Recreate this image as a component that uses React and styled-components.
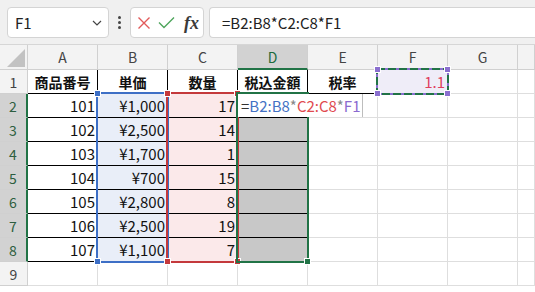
import React from 'react';
import styled, { createGlobalStyle } from 'styled-components';

const Global = createGlobalStyle`
  html, body { margin: 0; padding: 0; background: #fff; }
  body {
    font-family: "Noto Sans CJK JP", "Noto Sans", sans-serif;
    width: 535px; height: 292px; overflow: hidden;
  }
`;

const Page = styled.div`
  width: 535px;
  height: 292px;
  overflow: hidden;
  display: flex;
  flex-direction: column;
  background: #fff;
`;

const Toolbar = styled.div`
  flex: none;
  height: 45px;
  box-sizing: border-box;
  background: #f0f0f0;
  border-bottom: 1px solid #d6d6d6;
  display: flex;
  align-items: flex-start;
  padding: 7px 0 0 7px;
`;

const NameBox = styled.div`
  box-sizing: border-box;
  width: 102px;
  height: 31px;
  background: #fff;
  border: 1px solid #d4d4d4;
  border-radius: 4px;
  display: flex;
  align-items: center;
  justify-content: space-between;
  padding: 0 6px 0 7px;
  font-size: 15px;
  color: #222;
`;

const Grip = styled.div`
  width: 21px;
  height: 31px;
  display: flex;
  flex-direction: column;
  align-items: center;
  justify-content: center;
  gap: 2px;
  & > i {
    display: block;
    width: 3px;
    height: 3px;
    border-radius: 50%;
    background: #444;
  }
`;

const ButtonGroup = styled.div`
  box-sizing: border-box;
  width: 74px;
  height: 31px;
  background: #fff;
  border: 1px solid #d4d4d4;
  border-radius: 4px;
  display: flex;
  align-items: center;
  padding: 0 4px 0 6px;
  gap: 7px;
`;

const Fx = styled.span`
  font-family: "Liberation Serif", "DejaVu Serif", serif;
  font-style: italic;
  font-weight: 700;
  font-size: 18px;
  color: #3a3a3a;
  letter-spacing: 0px;
  margin-left: 2px;
  line-height: 1;
`;

const FormulaBox = styled.div`
  flex: 1;
  box-sizing: border-box;
  height: 31px;
  margin-left: 5px;
  background: #fff;
  border: 1px solid #d4d4d4;
  border-right: none;
  border-radius: 4px 0 0 4px;
  display: flex;
  align-items: center;
  padding-left: 12px;
  font-size: 15px;
  color: #222;
  white-space: nowrap;
`;

const Sheet = styled.div`
  flex: none;
  display: grid;
  grid-template-columns: 28px repeat(7, 70px) 1fr;
  grid-template-rows: 25px repeat(9, 24px);
`;

const Corner = styled.div`
  grid-row: 1;
  grid-column: 1;
  box-sizing: border-box;
  background: #f3f3f3;
  border-right: 1px solid #d0d0d0;
  border-bottom: 1px solid #d0d0d0;
  display: flex;
`;

const ColHead = styled.div`
  grid-row: 1;
  grid-column: ${p => p.$c};
  box-sizing: border-box;
  background: ${p => (p.$sel ? '#d2d2d2' : '#f3f3f3')};
  border-right: 1px solid #d0d0d0;
  border-bottom: ${p => (p.$sel ? '2px solid #217346' : '1px solid #d0d0d0')};
  display: flex;
  align-items: center;
  justify-content: center;
  font-size: 14px;
  color: ${p => (p.$sel ? '#1d6b3c' : '#444')};
`;

const RowHead = styled.div`
  grid-row: ${p => p.$r};
  grid-column: 1;
  box-sizing: border-box;
  background: ${p => (p.$sel ? '#d2d2d2' : '#f3f3f3')};
  border-right: ${p => (p.$sel ? '2px solid #217346' : '1px solid #d0d0d0')};
  border-bottom: 1px solid #d0d0d0;
  display: flex;
  align-items: center;
  justify-content: center;
  font-size: 14px;
  color: ${p => (p.$sel ? '#2d5e40' : '#444')};
`;

const Cell = styled.div`
  grid-row: ${p => p.$r};
  grid-column: ${p => p.$c};
  box-sizing: border-box;
  min-width: 0;
  background: ${p => p.$bg || '#fff'};
  border-right: 1px solid ${p => p.$line || '#dedede'};
  border-bottom: 1px solid ${p => p.$line || '#dedede'};
  display: flex;
  align-items: center;
  justify-content: ${p => (p.$align === 'right' ? 'flex-end' : p.$align === 'center' ? 'center' : 'flex-start')};
  padding: 0 2px;
  font-size: ${p => (p.$bold ? '14px' : '15px')};
  font-weight: ${p => (p.$bold ? 700 : 400)};
  color: ${p => p.$color || '#111'};
  white-space: nowrap;
`;

const RangeBox = styled.div`
  grid-column: ${p => p.$col};
  grid-row: ${p => p.$row};
  margin: -2px -1px -1px -2px;
  border: 2px solid ${p => p.$color};
  position: relative;
  z-index: ${p => p.$z || 2};
  pointer-events: none;
`;

const Handle = styled.span`
  position: absolute;
  width: 5px;
  height: 5px;
  background: ${p => p.$color};
  border: 1px solid #fff;
  ${p => p.$v}: -4px;
  ${p => p.$h}: -4px;
`;

const Marquee = styled.svg`
  position: absolute;
  left: -2px;
  top: -2px;
  width: calc(100% + 4px);
  height: calc(100% + 4px);
  overflow: visible;
`;

const EditBox = styled.div`
  grid-column: 5 / span 2;
  grid-row: 3;
  justify-self: start;
  align-self: start;
  box-sizing: border-box;
  width: 125px;
  height: 23px;
  background: #fff;
  border-right: 1px solid #bdbdbd;
  z-index: 3;
  display: flex;
  align-items: center;
  padding-left: 3px;
  font-size: 15px;
  white-space: nowrap;
  color: #333;
`;

const Tok = styled.span`
  color: ${p => p.$color};
`;

const COLS = ['A', 'B', 'C', 'D', 'E', 'F', 'G', ''];
const HEADERS = ['商品番号', '単価', '数量', '税込金額', '税率'];
const DATA = [
  [101, '¥1,000', 17],
  [102, '¥2,500', 14],
  [103, '¥1,700', 1],
  [104, '¥700', 15],
  [105, '¥2,800', 8],
  [106, '¥2,500', 19],
  [107, '¥1,100', 7],
];

const BLUE = '#3d6fc6';
const RED = '#c4393c';
const GREEN = '#217346';
const PURPLE = '#8a6fcf';

function cellProps(row, ci) {
  const p = { children: '' };
  if (row === 1) {
    if (ci < 5) {
      p.children = HEADERS[ci];
      p.$bold = true;
      p.$align = 'center';
      p.$line = '#000';
    } else if (ci === 5) {
      p.children = '1.1';
      p.$align = 'right';
      p.$color = '#e0405e';
      p.$bg = '#efedf8';
    }
  } else if (row <= 8) {
    const d = DATA[row - 2];
    if (ci < 4) p.$line = '#000';
    p.$align = 'right';
    if (ci === 0) p.children = d[0];
    if (ci === 1) { p.children = d[1]; p.$bg = '#e9eef8'; }
    if (ci === 2) { p.children = d[2]; p.$bg = '#fbe9ea'; }
    if (ci === 3 && row > 2) p.$bg = '#c8c8c8';
  }
  return p;
}

export default function App() {
  const rows = [];
  for (let r = 1; r <= 9; r++) {
    rows.push(
      <RowHead key={'h' + r} $r={r + 1} $sel={r >= 2 && r <= 8}>{r}</RowHead>
    );
    COLS.forEach((c, ci) => {
      const p = cellProps(r, ci);
      rows.push(<Cell key={r + '-' + ci} $r={r + 1} $c={ci + 2} {...p} />);
    });
  }

  return (
    <>
      <Global />
      <Page>
        <Toolbar>
          <NameBox>
            <span>F1</span>
            <svg width="10" height="6" viewBox="0 0 10 6">
              <polyline points="1,1 5,5 9,1" fill="none" stroke="#444" strokeWidth="1.2" />
            </svg>
          </NameBox>
          <Grip><i /><i /><i /></Grip>
          <ButtonGroup>
            <svg width="14" height="14" viewBox="0 0 14 14">
              <path d="M1.5 1.5 L12.5 12.5 M12.5 1.5 L1.5 12.5" stroke="#e25a5a" strokeWidth="1.4" fill="none" />
            </svg>
            <svg width="17" height="13" viewBox="0 0 17 13">
              <polyline points="1,6.5 6,11.5 16,1.5" stroke="#4fa55d" strokeWidth="1.4" fill="none" />
            </svg>
            <Fx>fx</Fx>
          </ButtonGroup>
          <FormulaBox>=B2:B8*C2:C8*F1</FormulaBox>
        </Toolbar>
        <Sheet>
          <Corner>
            <svg width="27" height="24" viewBox="0 0 27 24">
              <polygon points="7,22 25,22 25,4" fill="#c2c2c2" />
            </svg>
          </Corner>
          {COLS.map((c, i) => (
            <ColHead key={'c' + i} $c={i + 2} $sel={c === 'D'}>{c}</ColHead>
          ))}
          {rows}

          <RangeBox $col={3} $row="3 / span 7" $color={BLUE}>
            <Handle $color={BLUE} $v="top" $h="left" />
            <Handle $color={BLUE} $v="top" $h="right" />
            <Handle $color={BLUE} $v="bottom" $h="left" />
            <Handle $color={BLUE} $v="bottom" $h="right" />
          </RangeBox>
          <RangeBox $col={4} $row="3 / span 7" $color={RED}>
            <Handle $color={RED} $v="top" $h="left" />
            <Handle $color={RED} $v="top" $h="right" />
            <Handle $color={RED} $v="bottom" $h="left" />
            <Handle $color={RED} $v="bottom" $h="right" />
          </RangeBox>
          <RangeBox $col={5} $row="3 / span 7" $color={GREEN}>
            <Handle $color={GREEN} $v="bottom" $h="right" />
          </RangeBox>
          <RangeBox $col={7} $row={2} $color={PURPLE}>
            <Marquee viewBox="0 0 73 27" preserveAspectRatio="none">
              <rect x="1" y="1" width="71" height="25" fill="none" stroke={GREEN} strokeWidth="2" strokeDasharray="8 3" shapeRendering="crispEdges" />
            </Marquee>
            <Handle $color={PURPLE} $v="top" $h="left" />
            <Handle $color={PURPLE} $v="top" $h="right" />
            <Handle $color={PURPLE} $v="bottom" $h="left" />
            <Handle $color={PURPLE} $v="bottom" $h="right" />
          </RangeBox>

          <EditBox>
            <Tok $color="#333">=</Tok>
            <Tok $color="#4472c4">B2:B8</Tok>
            <Tok $color="#888">*</Tok>
            <Tok $color="#e04a4f">C2:C8</Tok>
            <Tok $color="#888">*</Tok>
            <Tok $color="#8b6ad0">F1</Tok>
          </EditBox>
        </Sheet>
      </Page>
    </>
  );
}
